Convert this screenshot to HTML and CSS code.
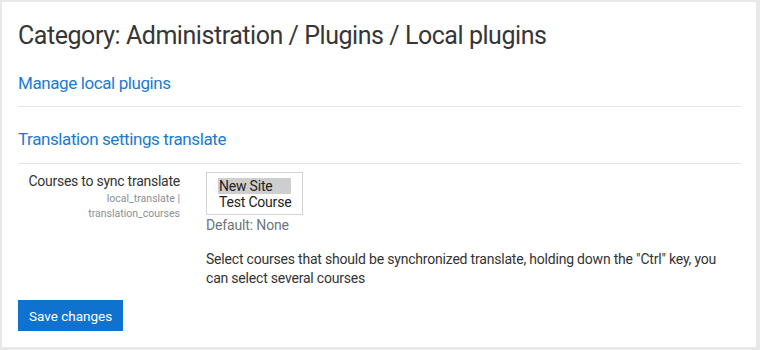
FILE: index.html
```html
<!DOCTYPE html>
<html lang="en">
  <head>
    <meta charset="UTF-8" />
    <title>Category: Administration / Plugins / Local plugins</title>
    <link rel="stylesheet" href="styles.css">
  </head>
  <body>
    <div class="page">
      <h2 class="page-title">Category: Administration / Plugins / Local plugins</h2>
      <div class="section">
        <a class="section-link" href="#">Manage local plugins</a>
      </div>
      <div class="section">
        <h3 class="section-link">Translation settings translate</h3>
      </div>
      <div class="setting">
        <div class="setting-label">
          <label for="courses">Courses to sync translate</label>
          <span class="setting-name">local_translate |<br />translation_courses</span>
        </div>
        <div class="setting-value">
          <div class="course-select" id="courses">
            <div class="option selected">New Site</div>
            <div class="option">Test Course</div>
          </div>
          <div class="default">Default: None</div>
          <p class="description">
            Select courses that should be synchronized translate, holding down the "Ctrl" key, you can select several courses
          </p>
        </div>
      </div>
      <button class="save">Save changes</button>
    </div>
  </body>
</html>
```

FILE: styles.css
```css
body {
  margin: 0;
  padding: 2px 4px 3px 2px;
  background: #e8e8e8;
  font-family: "Roboto", "Liberation Sans", sans-serif;
  color: #333;
  height: 350px;
  box-sizing: border-box;
  overflow: hidden;
}

.page {
  background: #fff;
  height: 100%;
  padding: 18px 15px 0 16px;
  box-sizing: border-box;
}

.page-title {
  margin: 0 0 20px;
  font-size: 25px;
  font-weight: 400;
  line-height: 32px;
  letter-spacing: -0.45px;
  color: #363636;
}

.section {
  border-bottom: 1px solid #e6e6e6;
  padding-bottom: 12px;
  margin-bottom: 21px;
}

.section + .section {
  padding-bottom: 13px;
}

.section-link {
  display: block;
  margin: 0;
  font-size: 17px;
  font-weight: 400;
  line-height: 22px;
  letter-spacing: -0.4px;
  color: #1a7bd0;
  text-decoration: none;
}

.setting {
  display: flex;
  margin-top: -21px;
}

.setting-label {
  width: 162px;
  text-align: right;
  display: flex;
  flex-direction: column;
  padding-top: 7px;
  white-space: nowrap;
}

.setting-label label {
  font-size: 14px;
  line-height: 20px;
  letter-spacing: -0.25px;
  color: #333;
}

.setting-name {
  font-size: 10.5px;
  line-height: 15px;
  color: #8a8f94;
}

.setting-value {
  margin-left: 26px;
  flex: 1;
  padding-top: 8px;
}

.course-select {
  width: 84px;
  height: 36px;
  border: 1px solid #d3d3d3;
  padding: 5px 0 0 11px;
  box-sizing: content-box;
  font-size: 14px;
  line-height: 16px;
  letter-spacing: -0.2px;
  color: #222;
  white-space: nowrap;
}

.option {
  width: 72px;
  padding-left: 1px;
}

.option.selected {
  background: #cecece;
}

.default {
  font-size: 14px;
  line-height: 20px;
  letter-spacing: -0.15px;
  color: #6f7479;
}

.description {
  margin: 15px 0 0;
  font-size: 14px;
  line-height: 19px;
  letter-spacing: -0.2px;
  color: #333;
}

.save {
  margin-top: 12px;
  font-family: inherit;
  font-size: 13.5px;
  padding: 0 11px;
  height: 31px;
  background: #0f72cf;
  color: #fff;
  border: none;
  border-radius: 0;
}
```
